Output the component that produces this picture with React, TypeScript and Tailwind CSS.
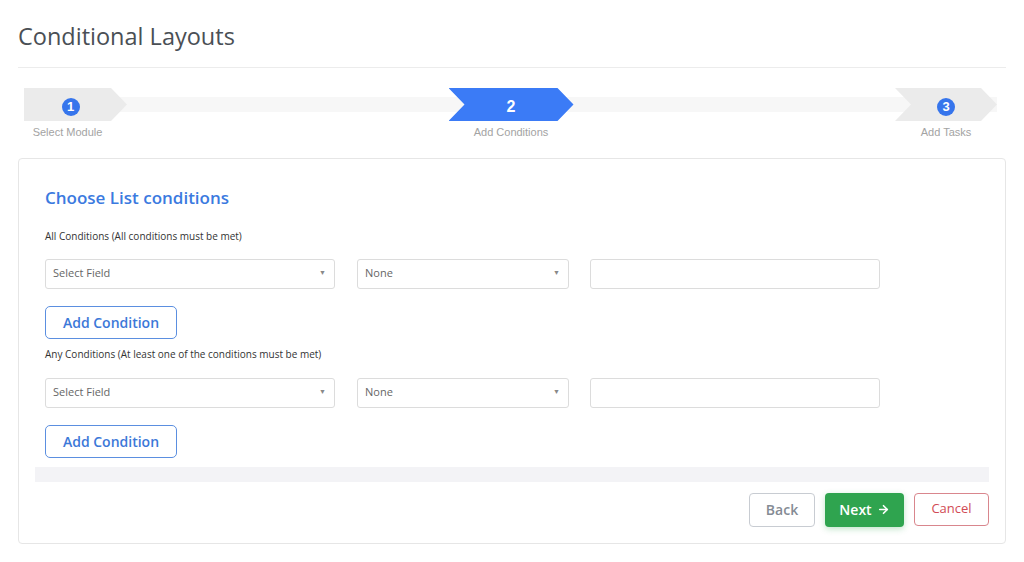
import React from 'react';
import { ArrowRight } from 'lucide-react';

const sans = { fontFamily: '"Open Sans", "Noto Sans", sans-serif' };
const arial = { fontFamily: '"Liberation Sans", Arial, sans-serif' };

type Step = { num: number; label: string; active?: boolean; first?: boolean; width: string };

const StepChevron: React.FC<Step> = ({ num, label, active, first, width }) => {
  const clip = first
    ? 'polygon(0 0, calc(100% - 16px) 0, 100% 50%, calc(100% - 16px) 100%, 0 100%)'
    : 'polygon(0 0, calc(100% - 16px) 0, 100% 50%, calc(100% - 16px) 100%, 0 100%, 16px 50%)';
  return (
    <div className={`flex flex-col items-center shrink-0 ${width}`}>
      <div
        className={`h-[33px] w-full flex items-center justify-center pt-[5px] ${active ? 'bg-[#3b7bf6]' : 'bg-[#ebebeb]'} ${first ? 'pr-[10px]' : ''}`}
        style={{ clipPath: clip }}
      >
        {active ? (
          <span className="text-white text-[16px] font-bold" style={arial}>{num}</span>
        ) : (
          <span
            className="w-[18px] h-[18px] rounded-full bg-[#3675ec] text-white text-[13px] font-bold flex items-center justify-center"
            style={arial}
          >
            {num}
          </span>
        )}
      </div>
      <div className={`mt-[3px] text-[11px] text-[#a3a3a3] ${first ? 'pr-[16px]' : ''}`} style={arial}>
        {label}
      </div>
    </div>
  );
};

const SelectBox: React.FC<{ text: string; width: string }> = ({ text, width }) => (
  <div
    className={`${width} h-[30px] border border-[#dcdcdc] rounded-[3px] bg-white flex items-center justify-between px-[7px] text-[11px] text-[#666]`}
  >
    <span>{text}</span>
    <span className="text-[7px] text-[#888] pr-[1px]">▼</span>
  </div>
);

const ConditionRow: React.FC = () => (
  <div className="flex items-center">
    <SelectBox text="Select Field" width="w-[290px]" />
    <div className="w-[22px]" />
    <SelectBox text="None" width="w-[212px]" />
    <div className="w-[21px]" />
    <div className="w-[290px] h-[30px] border border-[#dcdcdc] rounded-[3px] bg-white" />
  </div>
);

const AddButton: React.FC = () => (
  <button className="w-[132px] h-[33px] border border-[#5b8fe0] rounded-[5px] text-[#3c78d8] text-[14px] font-semibold bg-white">
    Add Condition
  </button>
);

export default function App() {
  return (
    <div className="w-[1024px] h-[562px] bg-white px-[18px] overflow-hidden" style={sans}>
      <h1 className="text-[23.5px] text-[#4a4f55] pt-[21px] pb-[16px] leading-[30px]">Conditional Layouts</h1>
      <div className="h-px bg-[#ececec]" />

      <div className="px-[6px] pt-[20px]">
        <div className="relative flex items-start">
          <div className="absolute left-0 right-[3px] top-[9px] h-[15px] bg-[#f7f7f7]" />
          <div className="relative flex items-start w-full">
            <StepChevron num={1} label="Select Module" first width="w-[103px]" />
            <div className="flex-1" />
            <StepChevron num={2} label="Add Conditions" active width="w-[125px]" />
            <div className="flex-1" />
            <StepChevron num={3} label="Add Tasks" width="w-[102px]" />
            <div className="w-[3px]" />
          </div>
        </div>
      </div>

      <div className="mt-[17px] border border-[#e6e6e6] rounded-[4px] h-[386px] flex flex-col">
        <div className="px-[26px] pt-[27px]">
          <h2 className="text-[17px] font-semibold text-[#3b7ae0] leading-[24px]">Choose List conditions</h2>
          <div className="mt-[19px] text-[10px] text-[#333] leading-[14px]">All Conditions (All conditions must be met)</div>
          <div className="mt-[16px]">
            <ConditionRow />
          </div>
          <div className="mt-[17px]">
            <AddButton />
          </div>
          <div className="mt-[8px] text-[10px] text-[#333] leading-[14px]">
            Any Conditions (At least one of the conditions must be met)
          </div>
          <div className="mt-[17px]">
            <ConditionRow />
          </div>
          <div className="mt-[17px]">
            <AddButton />
          </div>
        </div>
        <div className="mx-[16px] mt-[9px] h-[15px] bg-[#f3f3f6]" />
        <div className="flex justify-end gap-[10px] pr-[16px] mt-[11px]">
          <button className="w-[66px] h-[34px] border border-[#c8ccd2] rounded-[4px] text-[#858b94] text-[14px] font-semibold bg-white">
            Back
          </button>
          <button className="w-[79px] h-[34px] rounded-[4px] bg-[#2fa44f] text-white text-[14px] font-semibold flex items-center justify-center gap-[5px] shadow-[0_2px_6px_rgba(47,164,79,0.3)]">
            Next <ArrowRight size={13} strokeWidth={3} />
          </button>
          <button className="w-[75px] h-[33px] border border-[#d9868d] rounded-[4px] text-[#d14b55] text-[13px] bg-white">
            Cancel
          </button>
        </div>
      </div>
    </div>
  );
}
